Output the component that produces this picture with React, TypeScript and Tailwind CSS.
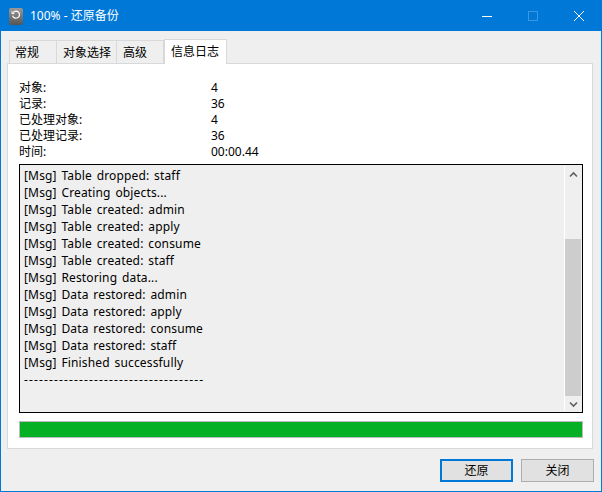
const font = { fontFamily: '"Noto Sans", "Noto Sans CJK SC", sans-serif' };

const stats = [
  ['对象:', '4'],
  ['记录:', '36'],
  ['已处理对象:', '4'],
  ['已处理记录:', '36'],
  ['时间:', '00:00.44'],
];

const logLines = [
  '[Msg] Table dropped: staff',
  '[Msg] Creating objects...',
  '[Msg] Table created: admin',
  '[Msg] Table created: apply',
  '[Msg] Table created: consume',
  '[Msg] Table created: staff',
  '[Msg] Restoring data...',
  '[Msg] Data restored: admin',
  '[Msg] Data restored: apply',
  '[Msg] Data restored: consume',
  '[Msg] Data restored: staff',
  '[Msg] Finished successfully',
];

function AppIcon() {
  return (
    <div className="w-[14px] h-[17px] rounded-[2px] bg-gradient-to-b from-[#9a9a9a] to-[#555555] flex items-start justify-center pt-[2px]">
      <svg width="10" height="10" viewBox="0 0 10 10" fill="none" stroke="#ffffff" strokeWidth="1.2">
        <path d="M2.2 2.6A3.5 3.5 0 1 1 1.6 5.6" />
        <path d="M1 1.2v2.4h2.4" strokeWidth="1" />
      </svg>
    </div>
  );
}

function TitleBar() {
  return (
    <div className="h-[30px] flex items-center bg-[#0078d7] text-white shrink-0">
      <div className="ml-[9px] mr-[7px]">
        <AppIcon />
      </div>
      <span className="text-[12px] flex-1">100% - 还原备份</span>
      <div className="flex">
        <div className="w-[46px] h-[30px] flex items-center justify-center">
          <div className="w-[10px] h-px bg-white" />
        </div>
        <div className="w-[46px] h-[30px] flex items-center justify-center">
          <div className="w-[10px] h-[10px] border border-[#3d97e0]" />
        </div>
        <div className="w-[46px] h-[30px] flex items-center justify-center">
          <svg width="10" height="10" viewBox="0 0 10 10" stroke="#ffffff" strokeWidth="1">
            <path d="M0 0L10 10M10 0L0 10" />
          </svg>
        </div>
      </div>
    </div>
  );
}

function Tabs() {
  return (
    <div className="flex items-end h-[24px] ml-[8px] text-[12px] text-black">
      <div className="w-[48px] h-[23px] pl-[5px] pt-[3px] border border-b-0 border-[#d9d9d9] bg-[#efefef]">常规</div>
      <div className="w-[60px] h-[23px] pl-[6px] pt-[3px] border border-b-0 border-l-0 border-[#d9d9d9] bg-[#efefef]">对象选择</div>
      <div className="w-[47px] h-[23px] pl-[6px] pt-[3px] border border-b-0 border-l-0 border-[#d9d9d9] bg-[#efefef]">高级</div>
      <div className="w-[63px] h-[25px] -mb-px pl-[6px] pt-[3px] border border-b-0 border-[#d9d9d9] bg-white relative">信息日志</div>
    </div>
  );
}

function Scrollbar() {
  return (
    <div className="w-[17px] ml-auto mr-px my-px flex flex-col items-center bg-[#efefef] border-l border-white">
      <div className="h-[17px] flex items-center justify-center shrink-0">
        <svg width="9" height="7" viewBox="0 0 9 7" fill="none" stroke="#606060" strokeWidth="1.6">
          <path d="M1 5.5L4.5 2L8 5.5" />
        </svg>
      </div>
      <div className="flex-1 w-full pt-[56px]">
        <div className="h-[157px] w-full bg-[#cdcdcd]" />
      </div>
      <div className="h-[17px] flex items-center justify-center shrink-0">
        <svg width="9" height="7" viewBox="0 0 9 7" fill="none" stroke="#606060" strokeWidth="1.6">
          <path d="M1 1.5L4.5 5L8 1.5" />
        </svg>
      </div>
    </div>
  );
}

export default function App() {
  return (
    <div className="w-[602px] h-[492px] flex flex-col border border-[#0078d7] border-t-0 bg-[#efefef] overflow-hidden" style={font}>
      <div className="-mx-px pt-px bg-[#0078d7]">
        <TitleBar />
      </div>
      <div className="h-[8px] shrink-0" />
      <Tabs />
      <div className="ml-[6px] mr-[8px] h-[386px] border border-[#d9d9d9] bg-white pl-[11px] pr-[9px] pt-[16px] flex flex-col shrink-0">
        <div className="text-[12px] leading-[16px] text-black">
          {stats.map(([label, value]) => (
            <div key={label} className="flex h-[16px]">
              <span className="w-[192px]">{label}</span>
              <span>{value}</span>
            </div>
          ))}
        </div>
        <div className="mt-[4px] h-[249px] border border-black bg-[#efefef] flex shrink-0">
          <div className="pl-[4px] pt-[2px] text-[12px] leading-[17px] text-black tracking-[0.15px] [word-spacing:1.5px]">
            {logLines.map((line, i) => (
              <div key={i} className="h-[17px] whitespace-nowrap">{line}</div>
            ))}
            <div className="h-[17px] whitespace-nowrap tracking-[1.14px]">------------------------------------</div>
          </div>
          <Scrollbar />
        </div>
        <div className="mt-[8px] h-[17px] border border-[#bcbcbc] bg-[#06b025] shrink-0" />
      </div>
      <div className="flex justify-end gap-[8px] mt-[10px] mr-[7px]">
        <button className="w-[73px] h-[23px] border-2 border-[#0078d7] bg-[#e1e1e1] text-[12px] text-black">还原</button>
        <button className="w-[73px] h-[23px] border border-[#adadad] bg-[#e1e1e1] text-[12px] text-black">关闭</button>
      </div>
    </div>
  );
}
